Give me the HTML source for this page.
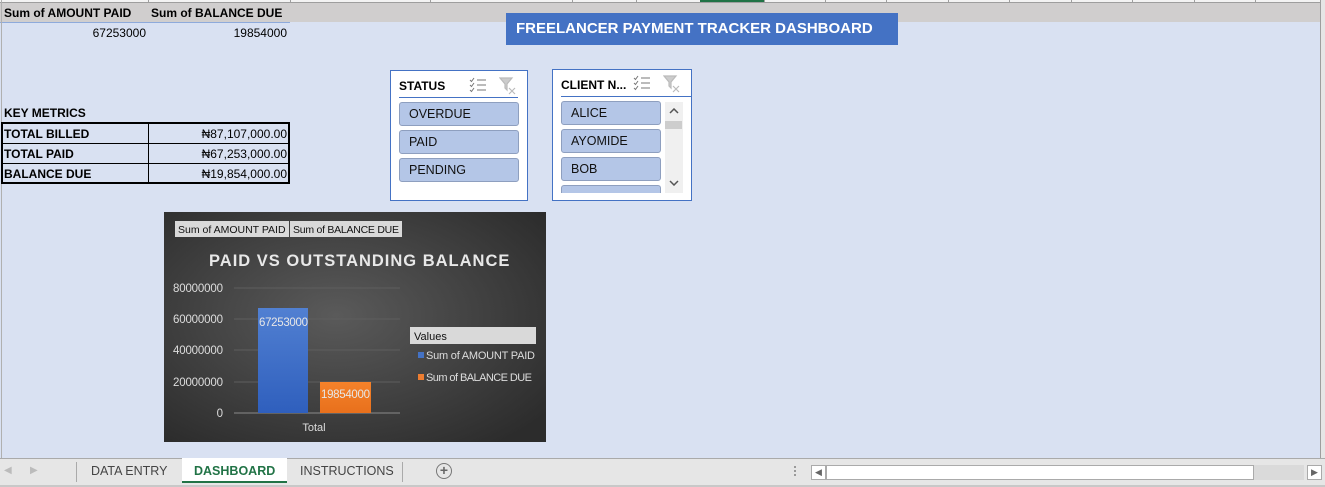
<!DOCTYPE html>
<html><head><meta charset="utf-8"><style>
*{margin:0;padding:0;box-sizing:border-box}
body{width:1325px;height:487px;overflow:hidden;background:#d9e1f2;font-family:"Liberation Sans","DejaVu Sans",sans-serif;position:relative}
.a{position:absolute}
.b{font-weight:bold}
.cl{position:absolute;top:0;width:1px;height:3px;background:#9e9e9e}
.slicer{position:absolute;background:#fff;border:1px solid #4472c4}
.slicer .t{position:absolute;left:8px;top:8px;font-size:12px;font-weight:bold;color:#000}
.slicer .ul{position:absolute;left:8px;height:1px;background:#4472c4}
.item{position:absolute;left:8px;height:24px;background:#b4c6e7;border:1px solid #8e9fbf;border-radius:3px;font-size:12.5px;color:#111;padding:4px 0 0 9px}
.km{position:absolute;font-size:12px;font-weight:bold;color:#000}
</style></head><body>
<div class="a" style="left:0;top:0;width:1325px;height:3px;background:#f3f3f3"></div>
<div class="cl" style="left:148px"></div><div class="cl" style="left:290px"></div><div class="cl" style="left:430px"></div><div class="cl" style="left:572px"></div><div class="cl" style="left:636px"></div>
<div class="a" style="left:700px;top:0;width:64px;height:3px;background:#217346"></div>
<div class="cl" style="left:764px"></div><div class="cl" style="left:825px"></div><div class="cl" style="left:886px"></div><div class="cl" style="left:948px"></div><div class="cl" style="left:1009px"></div><div class="cl" style="left:1071px"></div><div class="cl" style="left:1132px"></div><div class="cl" style="left:1194px"></div><div class="cl" style="left:1255px"></div>
<div class="a" style="left:0;top:2px;width:1320px;height:1px;background:#9e9e9e"></div>
<div class="a" style="left:0;top:3px;width:1320px;height:19px;background:#d0cece"></div>
<div class="a" style="left:0;top:22px;width:290px;height:1px;background:#8eaadb"></div>
<div class="a" style="left:1320px;top:0;width:1px;height:458px;background:#9e9e9e"></div>
<div class="a" style="left:1321px;top:0;width:4px;height:458px;background:#e6e6e6"></div>
<div class="a" style="left:1px;top:0;width:1px;height:458px;background:#b0b0b0"></div>
<div class="a b" style="left:4px;top:6px;font-size:12px">Sum of AMOUNT PAID</div>
<div class="a b" style="left:151px;top:6px;font-size:12px">Sum of BALANCE DUE</div>
<div class="a" style="left:0;top:26px;width:146px;text-align:right;font-size:12px">67253000</div>
<div class="a" style="left:150px;top:26px;width:137px;text-align:right;font-size:12px">19854000</div>
<div class="a" style="left:506px;top:13px;width:392px;height:32px;background:#4472c4;color:#fff;font-weight:bold;font-size:15px;padding:7px 0 0 10px">FREELANCER PAYMENT TRACKER DASHBOARD</div>
<div class="km" style="left:4px;top:106px">KEY METRICS</div>
<div class="a" style="left:1px;top:122px;width:289px;height:62px;border:2px solid #000"></div>
<div class="a" style="left:148px;top:122px;width:1px;height:62px;background:#000"></div>
<div class="a" style="left:1px;top:143px;width:289px;height:1px;background:#000"></div>
<div class="a" style="left:1px;top:163px;width:289px;height:1px;background:#000"></div>
<div class="km" style="left:4px;top:127px">TOTAL BILLED</div>
<div class="km" style="left:4px;top:147px">TOTAL PAID</div>
<div class="km" style="left:4px;top:167px">BALANCE DUE</div>
<div class="a" style="left:150px;top:127px;width:137px;text-align:right;font-size:12px">&#8358;87,107,000.00</div>
<div class="a" style="left:150px;top:147px;width:137px;text-align:right;font-size:12px">&#8358;67,253,000.00</div>
<div class="a" style="left:150px;top:167px;width:137px;text-align:right;font-size:12px">&#8358;19,854,000.00</div>

<div class="slicer" style="left:390px;top:70px;width:138px;height:131px">
<div class="t">STATUS</div>
<svg class="a" style="left:78px;top:6px" width="18" height="16" viewBox="0 0 18 16" fill="none" stroke="#777" stroke-width="1"><path d="M1 3l1.5 1.5L5 1M1 8l1.5 1.5L5 6M1 13l1.5 1.5L5 11M8 3h9M8 8h9M8 13h9"/></svg>
<svg class="a" style="left:108px;top:6px" width="18" height="18" viewBox="0 0 18 18" fill="none" stroke="#bbb" stroke-width="1.2"><path d="M1 1h12L8 7v6L6 11V7z" fill="#ccc"/><path d="M10 11l6 6M16 11l-6 6"/></svg>
<div class="ul" style="top:26px;width:119px"></div>
<div class="item" style="top:31px;width:120px">OVERDUE</div>
<div class="item" style="top:59px;width:120px">PAID</div>
<div class="item" style="top:87px;width:120px">PENDING</div>
</div>

<div class="slicer" style="left:552px;top:69px;width:140px;height:132px">
<div class="t">CLIENT N...</div>
<svg class="a" style="left:80px;top:5px" width="18" height="16" viewBox="0 0 18 16" fill="none" stroke="#777" stroke-width="1"><path d="M1 3l1.5 1.5L5 1M1 8l1.5 1.5L5 6M1 13l1.5 1.5L5 11M8 3h9M8 8h9M8 13h9"/></svg>
<svg class="a" style="left:110px;top:5px" width="18" height="18" viewBox="0 0 18 18" fill="none" stroke="#bbb" stroke-width="1.2"><path d="M1 1h12L8 7v6L6 11V7z" fill="#ccc"/><path d="M10 11l6 6M16 11l-6 6"/></svg>
<div class="ul" style="top:26px;width:130px"></div>
<div class="item" style="top:31px;width:100px">ALICE</div>
<div class="item" style="top:59px;width:100px">AYOMIDE</div>
<div class="item" style="top:87px;width:100px">BOB</div>
<div class="a" style="left:8px;top:115px;width:100px;height:8px;background:#b4c6e7;border:1px solid #8e9fbf;border-bottom:none;border-radius:3px 3px 0 0"></div>
<div class="a" style="left:112px;top:32px;width:18px;height:91px;background:#f0f0f0"></div>
<div class="a" style="left:112px;top:51px;width:17px;height:8px;background:#cdcdcd"></div>
<svg class="a" style="left:116px;top:38px" width="10" height="6" viewBox="0 0 10 6" fill="none" stroke="#555" stroke-width="1.5"><path d="M1 5l4-4 4 4"/></svg>
<svg class="a" style="left:116px;top:110px" width="10" height="6" viewBox="0 0 10 6" fill="none" stroke="#555" stroke-width="1.5"><path d="M1 1l4 4 4-4"/></svg>
</div>

<svg class="a" style="left:164px;top:212px" width="382" height="230" viewBox="0 0 382 230">
<defs><radialGradient id="g" cx="45%" cy="45%" r="70%"><stop offset="0" stop-color="#5a5a5a"/><stop offset="1" stop-color="#2c2c2c"/></radialGradient>
<linearGradient id="bl" x1="0" y1="0" x2="0" y2="1"><stop offset="0" stop-color="#5180d2"/><stop offset="1" stop-color="#2f5fbd"/></linearGradient>
<linearGradient id="or" x1="0" y1="0" x2="0" y2="1"><stop offset="0" stop-color="#f5822a"/><stop offset="1" stop-color="#e8701c"/></linearGradient></defs>
<rect width="382" height="230" fill="url(#g)"/>
<rect x="11" y="9" width="114" height="16" fill="#d9d9d9"/><rect x="126" y="9" width="112" height="16" fill="#d9d9d9"/>
<text x="14" y="21" font-size="10.5" fill="#111" font-family="Liberation Sans">Sum of AMOUNT PAID</text>
<text x="129" y="21" font-size="10.5" fill="#111" font-family="Liberation Sans" textLength="106">Sum of BALANCE DUE</text>
<text x="45" y="54" font-size="16.5" font-weight="bold" fill="#e8e8e8" font-family="Liberation Sans" letter-spacing="1">PAID VS OUTSTANDING BALANCE</text>
<g stroke="#5e5e5e" stroke-width="1"><path d="M70 76H236M70 107H236M70 138H236M70 170H236"/></g>
<path d="M70 201H236" stroke="#8a8a8a"/>
<g font-size="11.5" fill="#ddd" font-family="Liberation Sans" text-anchor="end"><text x="59" y="80" textLength="50">80000000</text><text x="59" y="111" textLength="50">60000000</text><text x="59" y="142" textLength="50">40000000</text><text x="59" y="174" textLength="50">20000000</text><text x="59" y="205">0</text></g>
<rect x="94" y="96" width="50" height="105" fill="url(#bl)"/>
<rect x="156" y="170" width="51" height="31" fill="url(#or)"/>
<text x="95" y="114" font-size="11.5" fill="#e6e6e6" font-family="Liberation Sans" textLength="49">67253000</text>
<text x="157" y="186" font-size="11.5" fill="#e6e6e6" font-family="Liberation Sans" textLength="49">19854000</text>
<text x="150" y="219" font-size="11" fill="#ddd" font-family="Liberation Sans" text-anchor="middle">Total</text>
<rect x="246" y="115" width="126" height="17" fill="#d9d9d9"/>
<text x="250" y="128" font-size="11" fill="#111" font-family="Liberation Sans">Values</text>
<rect x="254" y="140" width="6" height="6" fill="#4472c4"/><text x="262" y="147" font-size="11" fill="#ddd" font-family="Liberation Sans" textLength="109">Sum of AMOUNT PAID</text>
<rect x="254" y="162" width="6" height="6" fill="#ed7d31"/><text x="262" y="169" font-size="11" fill="#ddd" font-family="Liberation Sans" textLength="106">Sum of BALANCE DUE</text>
</svg>

<div class="a" style="left:0;top:458px;width:1325px;height:29px;background:#e6e6e6;border-top:1px solid #aaa"></div>
<div class="a" style="left:0;top:485px;width:1325px;height:2px;background:#c8c8c8"></div>
<div class="a" style="left:4px;top:465px;font-size:10px;color:#bbb">&#9664;</div>
<div class="a" style="left:30px;top:465px;font-size:10px;color:#bbb">&#9654;</div>
<div class="a" style="left:76px;top:462px;width:1px;height:20px;background:#aaa"></div>
<div class="a" style="left:91px;top:464px;font-size:12.5px;color:#444">DATA ENTRY</div>
<div class="a" style="left:182px;top:458px;width:105px;height:25px;background:#fff;border-bottom:2px solid #217346"></div>
<div class="a b" style="left:194px;top:464px;font-size:12.5px;color:#217346">DASHBOARD</div>
<div class="a" style="left:300px;top:464px;font-size:12.5px;color:#444">INSTRUCTIONS</div>
<div class="a" style="left:402px;top:462px;width:1px;height:20px;background:#aaa"></div>
<div class="a" style="left:436px;top:463px;width:16px;height:16px;border:1.5px solid #777;border-radius:50%;font-size:14px;line-height:12px;text-align:center;color:#666;font-weight:bold">+</div>
<div class="a" style="left:794px;top:466px;width:2px;height:2px;background:#999;box-shadow:0 4px 0 #999,0 8px 0 #999"></div>
<div class="a" style="left:811px;top:465px;width:15px;height:15px;background:#fff;border:1px solid #aaa;font-size:9px;text-align:center;color:#666;line-height:13px">&#9664;</div>
<div class="a" style="left:826px;top:465px;width:428px;height:15px;background:#fff;border:1px solid #aaa"></div>
<div class="a" style="left:1254px;top:465px;width:50px;height:15px;background:#dadada"></div>
<div class="a" style="left:1307px;top:465px;width:15px;height:15px;background:#fff;border:1px solid #aaa;font-size:9px;text-align:center;color:#666;line-height:13px">&#9654;</div>
</body></html>
